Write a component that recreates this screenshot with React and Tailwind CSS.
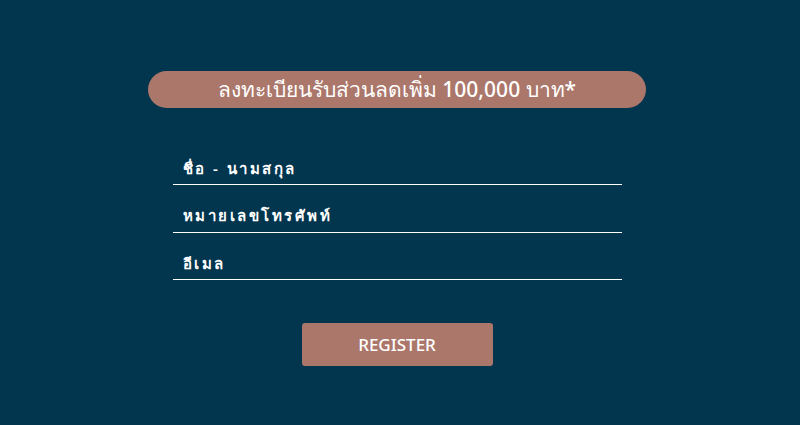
export default function App() {
  const fields = ["ชื่อ - นามสกุล", "หมายเลขโทรศัพท์", "อีเมล"];
  return (
    <div className="w-[800px] h-[425px] bg-[#02354e] flex flex-col items-center pt-[71px] pr-[6px]" style={{ fontFamily: '"Noto Sans", "DejaVu Sans", sans-serif' }}>
      <div className="w-[498px] h-[37px] rounded-full bg-[#ab776b] flex items-center justify-center text-white text-[21px] font-medium">
        ลงทะเบียนรับส่วนลดเพิ่ม 100,000 บาท*
      </div>
      <div className="w-[449px] mt-[44px] flex flex-col gap-[14.5px]">
        {fields.map((f) => (
          <div key={f} className="h-[33px] border-b border-white flex items-center pl-[10px] text-white text-[15px] font-semibold tracking-[2.5px]">
            {f}
          </div>
        ))}
      </div>
      <button className="mt-[43px] w-[191px] h-[43px] rounded-[3px] bg-[#ab776b] text-white text-[17px] font-medium">
        REGISTER
      </button>
    </div>
  );
}
